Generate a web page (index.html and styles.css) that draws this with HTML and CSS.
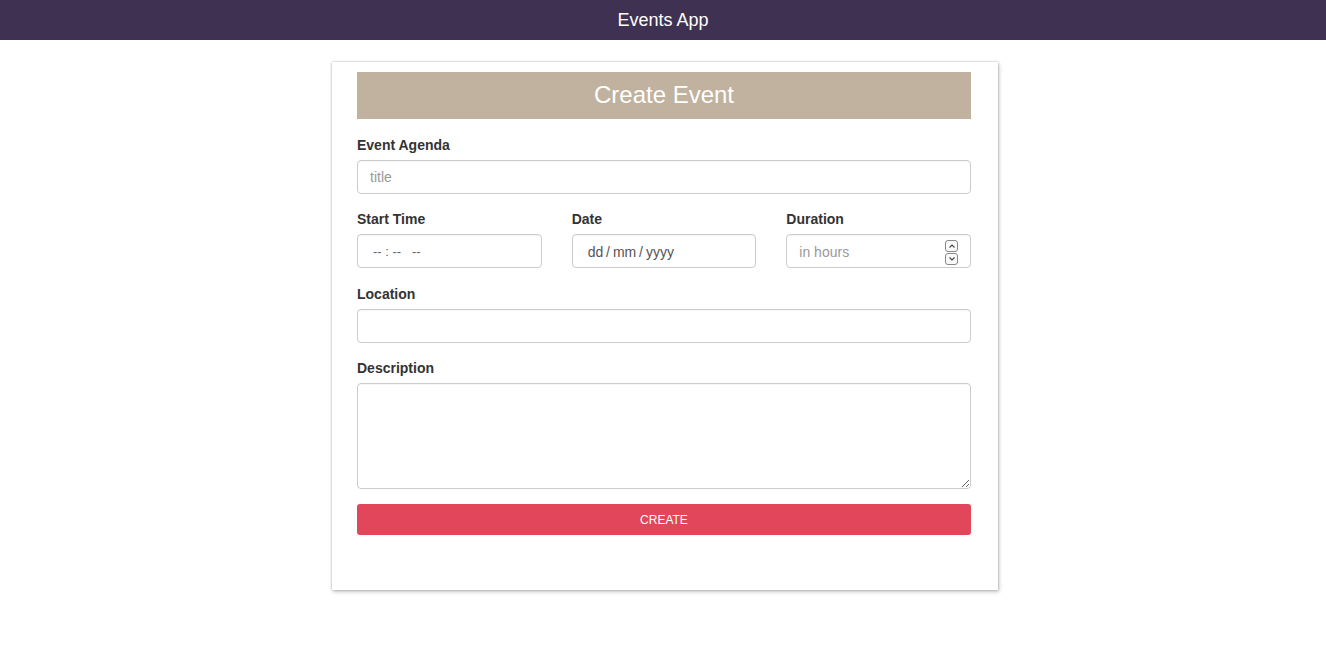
FILE: index.html
```html
<!DOCTYPE html>
<html lang="en">
<head>
<meta charset="utf-8">
<title>Events App</title>
<link rel="stylesheet" href="styles.css">
</head>
<body>
<header class="topbar">Events App</header>
<main class="card">
  <h1 class="banner">Create Event</h1>
  <form class="form">
    <div class="group">
      <label class="label">Event Agenda</label>
      <input class="control" type="text" placeholder="title">
    </div>
    <div class="row">
      <div class="group col">
        <label class="label">Start Time</label>
        <div class="control faux"><span class="time">-- : --&nbsp;&nbsp;&nbsp;--</span></div>
      </div>
      <div class="group col">
        <label class="label">Date</label>
        <div class="control faux"><span class="date">dd / mm / yyyy</span></div>
      </div>
      <div class="group col">
        <label class="label">Duration</label>
        <div class="control faux num">
          <span class="ph">in hours</span>
          <span class="spin">
            <span class="spin-btn"><svg width="8" height="6" viewBox="0 0 8 6"><path d="M1.5 4.5 L4 2 L6.5 4.5" fill="none" stroke="#444" stroke-width="1.1"/></svg></span>
            <span class="spin-btn"><svg width="8" height="6" viewBox="0 0 8 6"><path d="M1.5 1.5 L4 4 L6.5 1.5" fill="none" stroke="#444" stroke-width="1.1"/></svg></span>
          </span>
        </div>
      </div>
    </div>
    <div class="group">
      <label class="label">Location</label>
      <input class="control" type="text">
    </div>
    <div class="group">
      <label class="label">Description</label>
      <textarea class="control area"></textarea>
    </div>
    <button class="btn" type="button">CREATE</button>
  </form>
</main>
</body>
</html>
```
FILE: styles.css
```css
* { box-sizing: border-box; }
html, body { margin: 0; padding: 0; }
body {
  font-family: "Liberation Sans", Arial, sans-serif;
  font-size: 14px;
  line-height: 20px;
  color: #333;
  background: #fff;
}
.topbar {
  height: 40px;
  background: #3f3152;
  color: #fff;
  font-size: 18px;
  line-height: 40px;
  text-align: center;
}
.card {
  width: 666px;
  margin: 22px auto 30px;
  padding: 10px 27px 55px 25px;
  box-shadow: 0 0 2px rgba(0,0,0,0.3), 1px 2px 4px rgba(0,0,0,0.22);
  background: #fff;
  position: relative;
  left: 2px;
}
.banner {
  margin: 0 0 16px;
  height: 47px;
  background: #c0b29e;
  color: #fff;
  font-weight: normal;
  font-size: 24px;
  line-height: 46px;
  text-align: center;
}
.form { display: block; }
.group { margin-bottom: 15px; }
.label {
  display: block;
  font-weight: bold;
  font-size: 14px;
  line-height: 20px;
  margin-bottom: 5px;
}
.control {
  display: block;
  width: 100%;
  height: 34px;
  padding: 6px 12px;
  font-family: "Liberation Sans", Arial, sans-serif;
  font-size: 14px;
  line-height: 20px;
  color: #555;
  background: #fff;
  border: 1px solid #ccc;
  border-radius: 4px;
  box-shadow: inset 0 1px 1px rgba(0,0,0,0.04);
  outline: none;
}
.control::placeholder { color: #999; }
.row {
  display: grid;
  grid-template-columns: 1fr 1fr 1fr;
  column-gap: 30px;
  margin-bottom: 1px;
}
.faux { display: flex; align-items: center; }
.time { padding-left: 3px; font-size: 13px; color: #666; padding-top: 1px; }
.date { padding-left: 3px; color: #555; word-spacing: -1px; padding-top: 1px; }
.num { justify-content: space-between; padding-right: 12px; }
.ph { color: #999; padding-top: 1px; }
.spin {
  display: flex;
  flex-direction: column;
  gap: 1px;
  margin-top: 2px;
}
.spin-btn {
  width: 13px;
  height: 12px;
  border: 1px solid #888;
  border-radius: 3px;
  display: flex;
  align-items: center;
  justify-content: center;
  background: #fafafa;
}
.area {
  height: 106px;
  resize: vertical;
}
.btn {
  display: block;
  width: 100%;
  height: 31px;
  margin-top: 0;
  border: 0;
  border-radius: 3px;
  background: #e1465a;
  color: #fff;
  font-family: "Liberation Sans", Arial, sans-serif;
  font-size: 12px;
  padding-top: 1px;
}
```
